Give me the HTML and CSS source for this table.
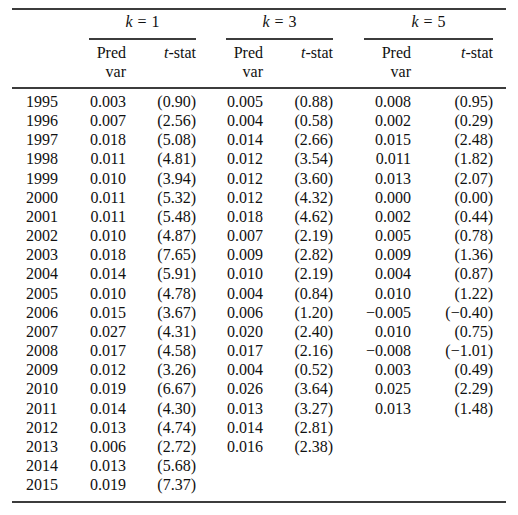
FILE: index.html
```html
<!DOCTYPE html>
<html>
<head>
<meta charset="utf-8">
<link rel="stylesheet" href="styles.css">
</head>
<body>
<table class="tbl">
  <colgroup>
    <col class="c-year"><col class="c-k1p"><col class="c-k1t"><col class="c-k3p"><col class="c-k3t"><col class="c-k5p"><col class="c-k5t">
  </colgroup>
  <thead>
    <tr class="grp-row">
      <th></th>
      <th colspan="2" class="grp"><div class="grp-in g1"><i>k</i><span class="eq">=</span>1</div></th>
      <th colspan="2" class="grp"><div class="grp-in g3"><i>k</i><span class="eq">=</span>3</div></th>
      <th colspan="2" class="grp"><div class="grp-in g5"><i>k</i><span class="eq">=</span>5</div></th>
    </tr>
    <tr class="sub-row">
      <th></th>
      <th class="p1">Pred<br>var</th><th class="t1"><i>t</i>-stat</th>
      <th class="p3">Pred<br>var</th><th class="t3"><i>t</i>-stat</th>
      <th class="p5">Pred<br>var</th><th class="t5"><i>t</i>-stat</th>
    </tr>
  </thead>
  <tbody>
    <tr class="first"><td>1995</td><td class="p1">0.003</td><td class="t1">(0.90)</td><td class="p3">0.005</td><td class="t3">(0.88)</td><td class="p5">0.008</td><td class="t5">(0.95)</td></tr>
    <tr><td>1996</td><td class="p1">0.007</td><td class="t1">(2.56)</td><td class="p3">0.004</td><td class="t3">(0.58)</td><td class="p5">0.002</td><td class="t5">(0.29)</td></tr>
    <tr><td>1997</td><td class="p1">0.018</td><td class="t1">(5.08)</td><td class="p3">0.014</td><td class="t3">(2.66)</td><td class="p5">0.015</td><td class="t5">(2.48)</td></tr>
    <tr><td>1998</td><td class="p1">0.011</td><td class="t1">(4.81)</td><td class="p3">0.012</td><td class="t3">(3.54)</td><td class="p5">0.011</td><td class="t5">(1.82)</td></tr>
    <tr><td>1999</td><td class="p1">0.010</td><td class="t1">(3.94)</td><td class="p3">0.012</td><td class="t3">(3.60)</td><td class="p5">0.013</td><td class="t5">(2.07)</td></tr>
    <tr><td>2000</td><td class="p1">0.011</td><td class="t1">(5.32)</td><td class="p3">0.012</td><td class="t3">(4.32)</td><td class="p5">0.000</td><td class="t5">(0.00)</td></tr>
    <tr><td>2001</td><td class="p1">0.011</td><td class="t1">(5.48)</td><td class="p3">0.018</td><td class="t3">(4.62)</td><td class="p5">0.002</td><td class="t5">(0.44)</td></tr>
    <tr><td>2002</td><td class="p1">0.010</td><td class="t1">(4.87)</td><td class="p3">0.007</td><td class="t3">(2.19)</td><td class="p5">0.005</td><td class="t5">(0.78)</td></tr>
    <tr><td>2003</td><td class="p1">0.018</td><td class="t1">(7.65)</td><td class="p3">0.009</td><td class="t3">(2.82)</td><td class="p5">0.009</td><td class="t5">(1.36)</td></tr>
    <tr><td>2004</td><td class="p1">0.014</td><td class="t1">(5.91)</td><td class="p3">0.010</td><td class="t3">(2.19)</td><td class="p5">0.004</td><td class="t5">(0.87)</td></tr>
    <tr><td>2005</td><td class="p1">0.010</td><td class="t1">(4.78)</td><td class="p3">0.004</td><td class="t3">(0.84)</td><td class="p5">0.010</td><td class="t5">(1.22)</td></tr>
    <tr><td>2006</td><td class="p1">0.015</td><td class="t1">(3.67)</td><td class="p3">0.006</td><td class="t3">(1.20)</td><td class="p5">−0.005</td><td class="t5">(−0.40)</td></tr>
    <tr><td>2007</td><td class="p1">0.027</td><td class="t1">(4.31)</td><td class="p3">0.020</td><td class="t3">(2.40)</td><td class="p5">0.010</td><td class="t5">(0.75)</td></tr>
    <tr><td>2008</td><td class="p1">0.017</td><td class="t1">(4.58)</td><td class="p3">0.017</td><td class="t3">(2.16)</td><td class="p5">−0.008</td><td class="t5">(−1.01)</td></tr>
    <tr><td>2009</td><td class="p1">0.012</td><td class="t1">(3.26)</td><td class="p3">0.004</td><td class="t3">(0.52)</td><td class="p5">0.003</td><td class="t5">(0.49)</td></tr>
    <tr><td>2010</td><td class="p1">0.019</td><td class="t1">(6.67)</td><td class="p3">0.026</td><td class="t3">(3.64)</td><td class="p5">0.025</td><td class="t5">(2.29)</td></tr>
    <tr><td>2011</td><td class="p1">0.014</td><td class="t1">(4.30)</td><td class="p3">0.013</td><td class="t3">(3.27)</td><td class="p5">0.013</td><td class="t5">(1.48)</td></tr>
    <tr><td>2012</td><td class="p1">0.013</td><td class="t1">(4.74)</td><td class="p3">0.014</td><td class="t3">(2.81)</td><td class="p5"></td><td class="t5"></td></tr>
    <tr><td>2013</td><td class="p1">0.006</td><td class="t1">(2.72)</td><td class="p3">0.016</td><td class="t3">(2.38)</td><td class="p5"></td><td class="t5"></td></tr>
    <tr><td>2014</td><td class="p1">0.013</td><td class="t1">(5.68)</td><td class="p3"></td><td class="t3"></td><td class="p5"></td><td class="t5"></td></tr>
    <tr class="last"><td>2015</td><td class="p1">0.019</td><td class="t1">(7.37)</td><td class="p3"></td><td class="t3"></td><td class="p5"></td><td class="t5"></td></tr>
  </tbody>
</table>
</body>
</html>
```

FILE: styles.css
```css
html, body {
  margin: 0;
  padding: 0;
  background: #fff;
}

body {
  padding: 8px 0 0 12px;
  font-family: "Liberation Serif", "Times New Roman", serif;
  font-size: 16px;
  color: #111;
}

.tbl {
  width: 494px;
  table-layout: fixed;
  border-collapse: collapse;
  border-spacing: 0;
  border-top: 2px solid #3c3c3c;
  border-bottom: 2px solid #3c3c3c;
}

.c-year { width: 77px; }
.c-k1p { width: 56px; }
.c-k1t { width: 66px; }
.c-k3p { width: 64px; }
.c-k3t { width: 73px; }
.c-k5p { width: 82px; }
.c-k5t { width: 76px; }

.tbl th, .tbl td {
  padding: 0;
  font-weight: normal;
  line-height: 19.15px;
  white-space: nowrap;
}

.grp-row th {
  padding-top: 2px;
  vertical-align: top;
}

.grp-in {
  text-align: center;
  line-height: 19px;
  padding-bottom: 7px;
  border-bottom: 2px solid #3c3c3c;
}

.eq {
  margin: 0 5px;
}

.g1 { margin: 0 15px 0 0; }
.g3 { margin: 0 15px 0 15px; }
.g5 { margin: 0 13px 0 16px; }

.sub-row th {
  padding-top: 3px;
  padding-bottom: 6px;
  line-height: 19px;
  vertical-align: top;
  border-bottom: 2px solid #3c3c3c;
}

.tbl td:first-child {
  padding-left: 14px;
  text-align: left;
}

.p1, .t1, .p3, .t3, .p5, .t5 { text-align: right; }

.p1 { padding-right: 19px !important; }
.t1 { padding-right: 15px !important; }
.p3 { padding-right: 12px !important; }
.t3 { padding-right: 15px !important; }
.p5 { padding-right: 19px !important; }
.t5 { padding-right: 13px !important; }

.first td { padding-top: 3px; }
.last td { padding-bottom: 7px; }
```
